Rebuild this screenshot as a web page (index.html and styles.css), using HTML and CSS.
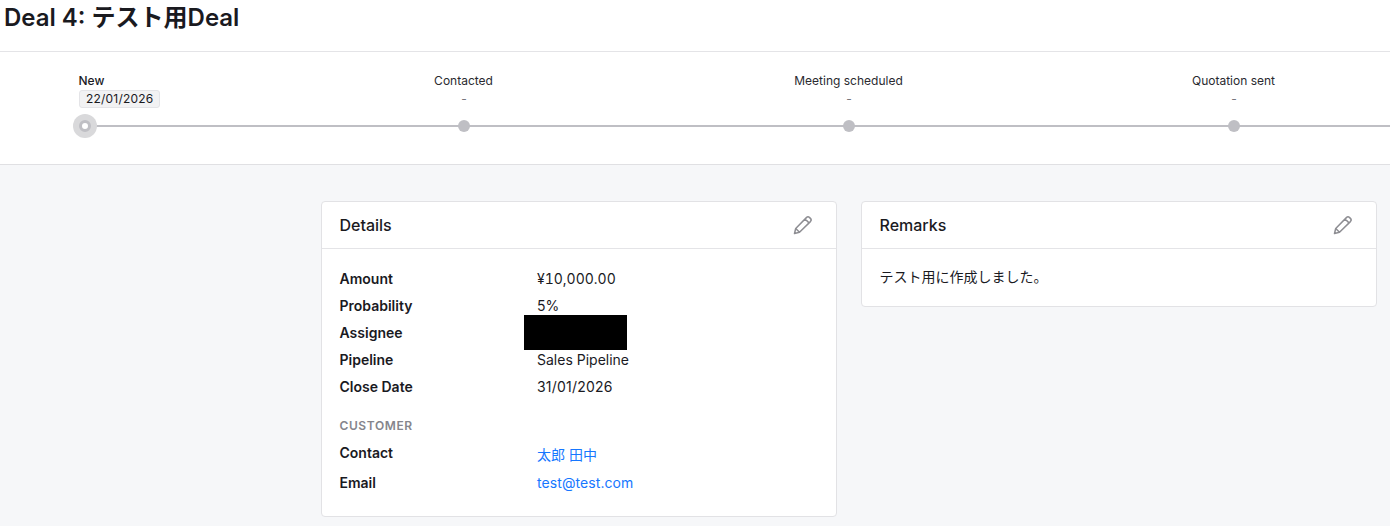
FILE: index.html
```html
<!DOCTYPE html>
<html lang="ja">
<head>
<meta charset="utf-8">
<title>Deal 4</title>
<link rel="stylesheet" href="styles.css">
</head>
<body>
<header class="page-header"><h1 class="page-title">Deal 4: テスト用Deal</h1></header>
<section class="stepper">
  <div class="track">
    <div class="step step-first">
      <div class="step-name step-name-active">New</div>
      <div class="step-date"><span class="badge">22/01/2026</span></div>
      <div class="dot-row"><span class="halo"><span class="ring"></span></span></div>
    </div>
    <div class="step">
      <div class="step-name">Contacted</div>
      <div class="step-date step-empty">-</div>
      <div class="dot-row"><span class="dot"></span></div>
    </div>
    <div class="step">
      <div class="step-name">Meeting scheduled</div>
      <div class="step-date step-empty">-</div>
      <div class="dot-row"><span class="dot"></span></div>
    </div>
    <div class="step">
      <div class="step-name">Quotation sent</div>
      <div class="step-date step-empty">-</div>
      <div class="dot-row"><span class="dot"></span></div>
    </div>
  </div>
</section>
<main class="content">
  <section class="card">
    <div class="card-head">
      <h2 class="card-title">Details</h2>
      <svg class="edit-icon" viewBox="0 0 20 20" width="20" height="20" aria-hidden="true"><path d="M1.5 18.5l1.2-5L13.4 2.6a2.3 2.3 0 0 1 3.2 0l.8.8a2.3 2.3 0 0 1 0 3.2L6.5 17.3zM2.7 13.5l3.8 3.8M12.1 4l3.9 3.9"/></svg>
    </div>
    <div class="card-body">
      <dl class="rows">
        <div class="row"><dt>Amount</dt><dd class="num">¥10,000.00</dd></div>
        <div class="row"><dt>Probability</dt><dd>5%</dd></div>
        <div class="row"><dt>Assignee</dt><dd class="assignee"><span class="redacted"></span></dd></div>
        <div class="row"><dt>Pipeline</dt><dd>Sales Pipeline</dd></div>
        <div class="row"><dt>Close Date</dt><dd class="date">31/01/2026</dd></div>
      </dl>
      <h3 class="section-label">CUSTOMER</h3>
      <dl class="rows rows-customer">
        <div class="row row-contact"><dt>Contact</dt><dd><a href="#">太郎 田中</a></dd></div>
        <div class="row"><dt>Email</dt><dd><a class="email" href="#">test@test.com</a></dd></div>
      </dl>
    </div>
  </section>
  <section class="card card-short">
    <div class="card-head">
      <h2 class="card-title">Remarks</h2>
      <svg class="edit-icon" viewBox="0 0 20 20" width="20" height="20" aria-hidden="true"><path d="M1.5 18.5l1.2-5L13.4 2.6a2.3 2.3 0 0 1 3.2 0l.8.8a2.3 2.3 0 0 1 0 3.2L6.5 17.3zM2.7 13.5l3.8 3.8M12.1 4l3.9 3.9"/></svg>
    </div>
    <p class="remarks">テスト用に作成しました。</p>
  </section>
</main>
</body>
</html>
```
FILE: styles.css
```css
* { box-sizing: border-box; }
html, body { margin: 0; height: 100%; }
body {
  overflow: hidden;
  background: #f6f7f9;
  color: #1a1a1f;
  font-family: Inter, "Noto Sans CJK JP", sans-serif;
  font-size: 14px;
}
.page-header {
  height: 52px;
  background: #fff;
  border-bottom: 1px solid #e4e4e7;
  padding: 4px 4px 0;
}
.page-title { margin: 0; font-size: 24px; line-height: 28px; font-weight: 600; }
.stepper {
  height: 113px;
  background: #fff;
  border-bottom: 1px solid #e0e0e3;
  padding-top: 21px;
  overflow: hidden;
}
.track {
  position: relative;
  display: flex;
  padding-left: 79px;
  width: 1500px;
}
.track::before {
  content: "";
  position: absolute;
  left: 85px;
  right: 0;
  top: 52px;
  height: 2px;
  background: #bfbfc4;
}
.step {
  width: 385px;
  flex: none;
  display: flex;
  flex-direction: column;
  align-items: center;
  font-size: 12px;
}
.step-first { width: 192.5px; align-items: flex-start; }
.step-name { line-height: 15px; height: 15px; color: #2a2a30; margin-right: 1px; }
.step-name-active { font-weight: 500; color: #1a1a1f; margin-right: 0; margin-left: -0.5px; }
.step-date { height: 18px; line-height: 18px; margin-top: 2px; }
.step-empty { color: #77777d; }
.badge {
  display: block;
  height: 18px;
  padding: 0 6px;
  line-height: 16px;
  background: #f2f2f3;
  border: 1px solid #e4e4e7;
  border-radius: 3px;
  letter-spacing: 0.2px;
}
.dot-row { position: relative; height: 24px; margin-top: 6px; display: flex; align-items: center; }
.dot { width: 12px; height: 12px; border-radius: 50%; background: #bfbfc4; }
.halo {
  width: 24px; height: 24px; margin-left: -6px;
  border-radius: 50%;
  background: #d9d9db;
  display: flex; align-items: center; justify-content: center;
}
.ring { width: 12px; height: 12px; border-radius: 50%; background: #fff; border: 3px solid #bfbfc4; }
.content {
  display: grid;
  grid-template-columns: 516px 516px;
  gap: 24px;
  padding: 36px 0 0 321px;
  align-items: start;
}
.card { background: #fff; border: 1px solid #e2e2e5; border-radius: 4px; }
.card-head {
  height: 47px;
  border-bottom: 1px solid #e4e4e7;
  padding: 0 23px 0 17.5px;
  display: flex;
  align-items: center;
  justify-content: space-between;
}
.card-title { margin: 0; font-size: 16px; font-weight: 500; }
.edit-icon { fill: none; stroke: #8e8e93; stroke-width: 1.5; stroke-linejoin: round; }
.card-body { padding: 16px 18px 17px 17.5px; }
.rows { margin: 0; }
.row { display: grid; grid-template-columns: 197.5px 1fr; height: 27px; line-height: 27px; }
.row dt { font-weight: 600; }
.row dd { margin: 0; }
.num { font-variant-numeric: tabular-nums; }
.date { letter-spacing: 0.2px; }
.row-contact { height: 30px; }
.row-contact dd { padding-top: 2px; }
.assignee { position: relative; }
.redacted { position: absolute; left: -13px; top: -4px; width: 103px; height: 35px; background: #000; }
.section-label {
  margin: 18px 0 0;
  font-size: 12px;
  line-height: 16px;
  font-weight: 600;
  letter-spacing: 0.6px;
  color: #85858c;
}
.rows-customer { margin-top: 5px; }
.rows-customer .row:last-child { height: 30px; }
a { color: #1677ff; text-decoration: none; }
.email { letter-spacing: 0.08px; }
.remarks { margin: 0; padding: 19px 18px 20px 17.5px; line-height: 18px; font-size: 14px; }
```
